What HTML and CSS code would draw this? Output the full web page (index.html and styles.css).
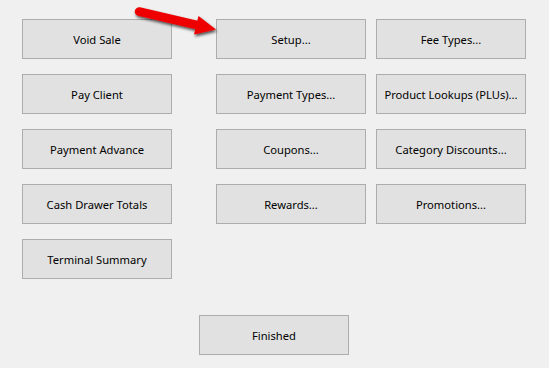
FILE: index.html
```html
<!DOCTYPE html>
<html>
<head>
<meta charset="utf-8">
<link rel="stylesheet" href="styles.css">
</head>
<body>
<div class="panel">
  <div class="grid">
    <button class="btn c1 r1">Void Sale</button>
    <button class="btn c2 r1">Setup...</button>
    <button class="btn c3 r1">Fee Types...</button>
    <button class="btn c1 r2">Pay Client</button>
    <button class="btn c2 r2">Payment Types...</button>
    <button class="btn c3 r2">Product Lookups (PLUs)...</button>
    <button class="btn c1 r3">Payment Advance</button>
    <button class="btn c2 r3">Coupons...</button>
    <button class="btn c3 r3">Category Discounts...</button>
    <button class="btn c1 r4">Cash Drawer Totals</button>
    <button class="btn c2 r4">Rewards...</button>
    <button class="btn c3 r4">Promotions...</button>
    <button class="btn c1 r5">Terminal Summary</button>
  </div>
  <div class="footer">
    <button class="btn">Finished</button>
  </div>
  <svg class="arrow" width="549" height="60" viewBox="0 0 549 60">
    <defs>
      <filter id="sh" x="-20%" y="-50%" width="140%" height="200%">
        <feGaussianBlur in="SourceAlpha" stdDeviation="1.6"/>
        <feOffset dx="1" dy="2" result="b"/>
        <feComponentTransfer><feFuncA type="linear" slope="0.7"/></feComponentTransfer>
        <feMerge><feMergeNode/><feMergeNode in="SourceGraphic"/></feMerge>
      </filter>
    </defs>
    <g filter="url(#sh)">
      <line x1="139" y1="11.5" x2="199" y2="25.5" stroke="#ee0000" stroke-width="8.5" stroke-linecap="round"/>
      <polygon points="198.5,16 216,29.5 194,34.5" fill="#ee0000"/>
    </g>
  </svg>
</div>
</body>
</html>
```
FILE: styles.css
```css
html, body {
  margin: 0;
  padding: 0;
  background: #f0f0f0;
}
.panel {
  position: relative;
  width: 549px;
  height: 368px;
  padding-top: 19px;
  box-sizing: border-box;
}
.grid {
  display: grid;
  grid-template-columns: 150px 150px 150px;
  grid-template-rows: repeat(5, 40px);
  column-gap: 10px;
  row-gap: 15px;
  margin-left: 22px;
}
.grid .c2 { margin-left: 34px; }
.grid .c3 { margin-left: 34px; }
.c1 { grid-column: 1; }
.c2 { grid-column: 2; }
.c3 { grid-column: 3; }
.r1 { grid-row: 1; }
.r2 { grid-row: 2; }
.r3 { grid-row: 3; }
.r4 { grid-row: 4; }
.r5 { grid-row: 5; }
.btn {
  width: 150px;
  height: 40px;
  box-sizing: border-box;
  border: 1px solid #adadad;
  background: #e1e1e1;
  color: #000;
  font-family: "Noto Sans", "Open Sans", sans-serif;
  font-size: 11.2px;
  padding: 0;
  margin: 0;
  text-align: center;
  border-radius: 0;
}
.footer {
  display: flex;
  justify-content: center;
  margin-top: 36px;
  padding-right: 1px;
}
.arrow {
  position: absolute;
  left: 0;
  top: 0;
}
```
